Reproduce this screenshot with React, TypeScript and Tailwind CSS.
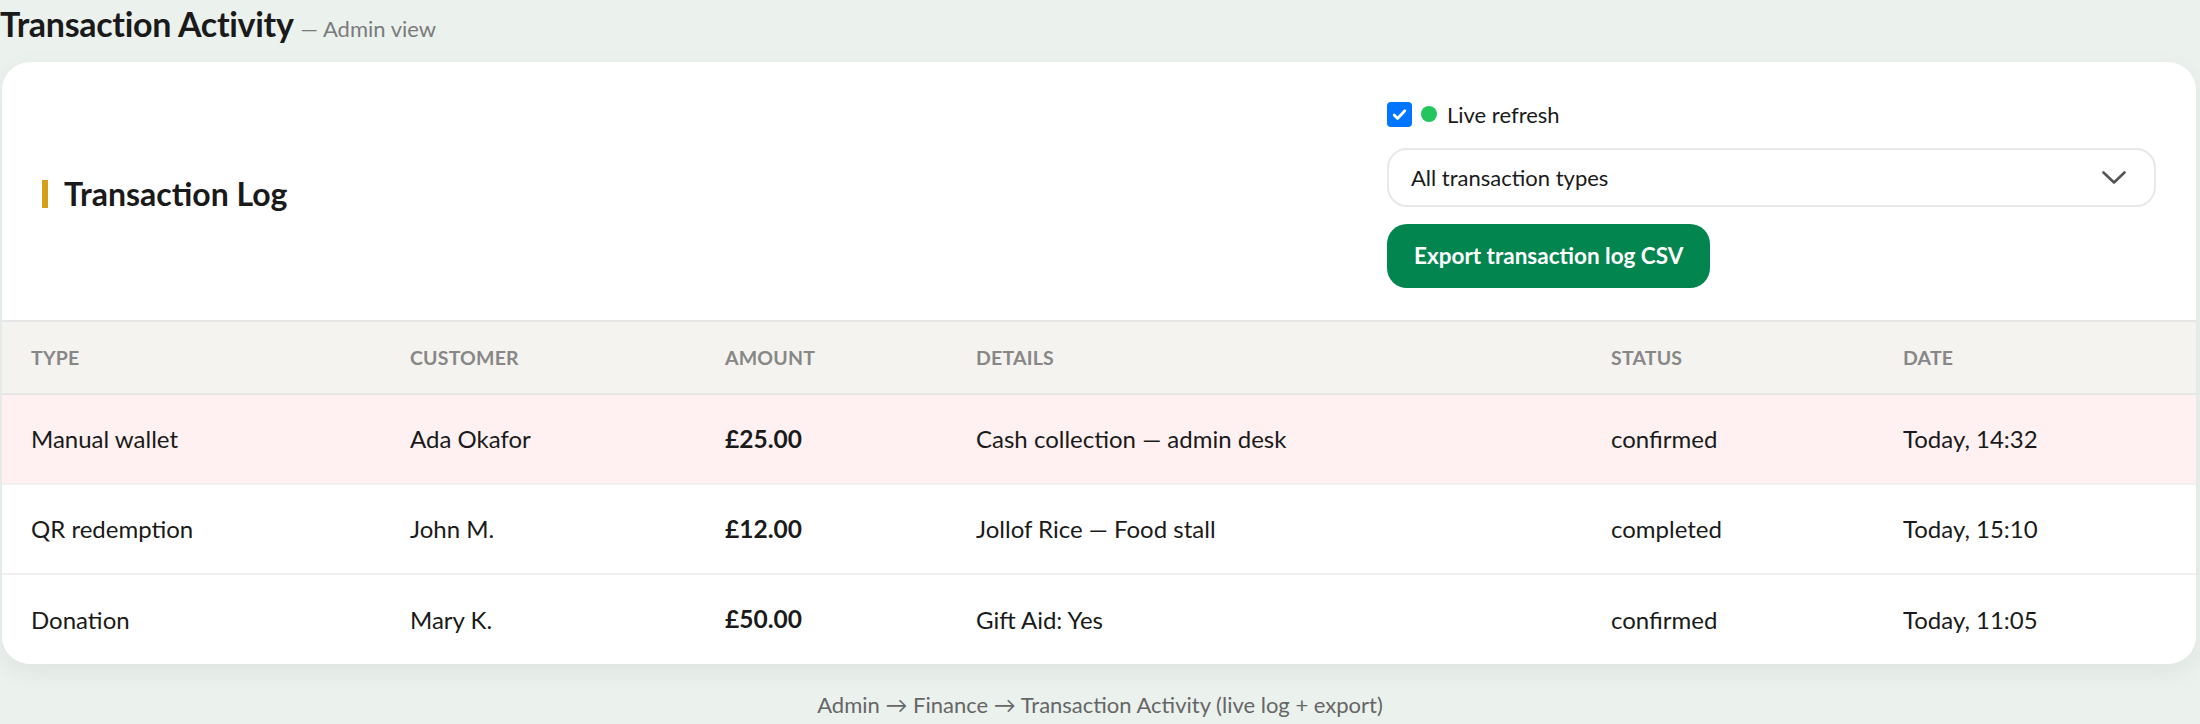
import React, { useState } from 'react';

interface TransactionRow {
  id: number;
  type: string;
  customer: string;
  amount: number;
  details: string;
  status: string;
  date: string;
  flagged?: boolean;
}

const transactions: TransactionRow[] = [
  { id: 1, type: 'Manual wallet', customer: 'Ada Okafor', amount: 25, details: 'Cash collection — admin desk', status: 'confirmed', date: 'Today, 14:32', flagged: true },
  { id: 2, type: 'QR redemption', customer: 'John M.', amount: 12, details: 'Jollof Rice — Food stall', status: 'completed', date: 'Today, 15:10' },
  { id: 3, type: 'Donation', customer: 'Mary K.', amount: 50, details: 'Gift Aid: Yes', status: 'confirmed', date: 'Today, 11:05' },
];

const columns = [
  { key: 'type', label: 'Type', width: 'w-[379px]' },
  { key: 'customer', label: 'Customer', width: 'w-[315px]' },
  { key: 'amount', label: 'Amount', width: 'w-[251px]' },
  { key: 'details', label: 'Details', width: 'w-[635px]' },
  { key: 'status', label: 'Status', width: 'w-[292px]' },
  { key: 'date', label: 'Date', width: 'w-[322px]' },
];

const App: React.FC = () => {
  const [liveRefresh, setLiveRefresh] = useState(true);
  const [filter, setFilter] = useState('all');

  const rows = filter === 'all' ? transactions : transactions.filter((t) => t.type === filter);

  return (
    <div className="min-h-screen bg-[#ebf1ed] font-['Lato',sans-serif] text-[#1a1a1a]">
      <div className="h-[45px] pt-[4px] mb-[17px] flex items-baseline leading-[40px]">
        <h1 className="text-[34px] font-bold tracking-[-0.3px]">Transaction Activity</h1>
        <span className="ml-[7px] text-[22px] text-[#7b7b7b]">— Admin view</span>
      </div>

      <div className="ml-[2px] mr-[4px] bg-white rounded-[28px] overflow-hidden shadow-[0_8px_24px_rgba(0,0,0,0.06)]">
        {/* card header: title on the left, filters + export on the right */}
        <div className="flex items-center justify-between px-10 pt-[38px] pb-[32px]">
          <div className="flex items-center gap-4">
            <span className="w-[6px] h-[28px] bg-[#d4a017]" />
            <h2 className="text-[32px] font-bold leading-none">Transaction Log</h2>
          </div>

          <div className="w-[769px] flex flex-col">
            <label className="flex items-center h-[28px] cursor-pointer" onClick={() => setLiveRefresh(!liveRefresh)}>
              <span className={`w-[25px] h-[25px] rounded-[4px] flex items-center justify-center ${liveRefresh ? 'bg-[#0075ff]' : 'bg-white border-2 border-gray-400'}`}>
                {liveRefresh && (
                  <svg width="17" height="17" viewBox="0 0 16 16" fill="none">
                    <path d="M3 8.5l3.2 3.2L13 4.5" stroke="white" strokeWidth="2.6" strokeLinecap="round" strokeLinejoin="round" />
                  </svg>
                )}
              </span>
              <span className="ml-[9px] w-[16px] h-[16px] rounded-full bg-[#22c55e]" />
              <span className="ml-[10px] text-[22px]">Live refresh</span>
            </label>

            <div className="relative mt-[20px] h-[59px]">
              <select
                value={filter}
                onChange={(e) => setFilter(e.target.value)}
                className="appearance-none w-full h-full rounded-[20px] border-2 border-[#e8e8e8] bg-white pl-[22px] text-[22px] text-[#1a1a1a] outline-none"
              >
                <option value="all">All transaction types</option>
                <option value="Manual wallet">Manual wallet</option>
                <option value="QR redemption">QR redemption</option>
                <option value="Donation">Donation</option>
              </select>
              <svg className="absolute right-[30px] top-[23px] pointer-events-none" width="24" height="13" viewBox="0 0 24 13" fill="none">
                <path d="M1.5 1.5l10.5 10 10.5-10" stroke="#555" strokeWidth="2.6" strokeLinecap="round" strokeLinejoin="round" />
              </svg>
            </div>

            <div className="mt-[17px]">
              <button className="h-[64px] px-[27px] rounded-[20px] bg-[#02854f] text-white text-[22.5px] font-bold">
                Export transaction log CSV
              </button>
            </div>
          </div>
        </div>

        <table className="w-full table-fixed border-collapse">
          <colgroup>
            {columns.map((c) => (
              <col key={c.key} className={c.width} />
            ))}
          </colgroup>
          <thead>
            <tr className="bg-[#f5f3ef] border-t-2 border-b-2 border-[#e6e6e6]">
              {columns.map((c) => (
                <th key={c.key} className="h-[73px] pl-[29px] text-left text-[19.5px] font-bold uppercase tracking-[0.2px] text-[#878787]">
                  {c.label}
                </th>
              ))}
            </tr>
          </thead>
          <tbody>
            {rows.map((row, i) => (
              <tr
                key={row.id}
                className={`${row.flagged ? 'bg-[#fff1f1]' : 'bg-white'} ${i < rows.length - 1 ? 'border-b-2 border-[#f0f0f0]' : ''}`}
              >
                <td className="h-[90px] pl-[29px] text-[24px]">{row.type}</td>
                <td className="pl-[29px] text-[24px]">{row.customer}</td>
                <td className="pl-[29px] text-[24.5px] font-bold">£{row.amount.toFixed(2)}</td>
                <td className="pl-[29px] text-[24px]">{row.details}</td>
                <td className="pl-[29px] text-[24px]">{row.status}</td>
                <td className="pl-[29px] text-[24px]">{row.date}</td>
              </tr>
            ))}
          </tbody>
        </table>
      </div>

      <p className="mt-[27px] text-center text-[22px] leading-[28px] text-[#666]">
        Admin → Finance → Transaction Activity (live log + export)
      </p>
    </div>
  );
};

export default App;
